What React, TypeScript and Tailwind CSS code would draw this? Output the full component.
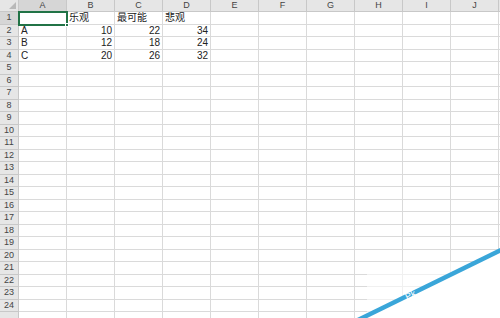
const cols = ["A", "B", "C", "D", "E", "F", "G", "H", "I", "J"];

const data: Record<number, { text: string; right?: boolean }[]> = {
  1: [{ text: "" }, { text: "乐观" }, { text: "最可能" }, { text: "悲观" }],
  2: [{ text: "A" }, { text: "10", right: true }, { text: "22", right: true }, { text: "34", right: true }],
  3: [{ text: "B" }, { text: "12", right: true }, { text: "18", right: true }, { text: "24", right: true }],
  4: [{ text: "C" }, { text: "20", right: true }, { text: "26", right: true }, { text: "32", right: true }],
};

const rows = Array.from({ length: 25 }, (_, i) => i + 1);

export default function App() {
  return (
    <div
      className="relative h-[318px] w-[500px] overflow-hidden bg-white text-[10px] text-[#222]"
      style={{ fontFamily: '"Liberation Sans", "Noto Sans CJK SC", sans-serif' }}
    >
      <div className="grid grid-cols-[19px_repeat(10,48px)_3px]">
        {/* Header row */}
        <div className="relative h-[12px] border-r border-b border-[#c8c8c8] bg-[#e6e6e6]">
          <svg className="absolute right-[2px] bottom-[2px]" width="7" height="7" viewBox="0 0 7 7">
            <polygon points="7,0 7,7 0,7" fill="#b9b9b9" />
          </svg>
        </div>
        {cols.map((c) => (
          <div
            key={c}
            className={`flex h-[12px] items-center justify-center border-r border-b border-[#c8c8c8] text-[9px] leading-none text-[#444] ${
              c === "A" ? "bg-[#d6d6d6]" : "bg-[#e6e6e6]"
            }`}
          >
            {c}
          </div>
        ))}
        <div className="h-[12px] border-b border-[#c8c8c8] bg-[#e6e6e6]" />

        {rows.map((r) => (
          <Row key={r} r={r} />
        ))}
      </div>

      {/* selection box on A1 */}
      <div className="absolute top-[11px] left-[18px] h-[14.5px] w-[50px] border-2 border-[#217346]">
        <div className="absolute -right-[3px] -bottom-[3px] h-[4px] w-[4px] border border-white bg-[#217346]" />
      </div>

      {/* watermark corner */}
      <svg className="pointer-events-none absolute inset-0" width="500" height="318" viewBox="0 0 500 318">
        <rect x="367" y="262" width="84" height="56" fill="#ffffff" opacity="0.6" />
        <polygon points="360,318 502,248 502,318" fill="#ffffff" />
        <line x1="358" y1="320" x2="503" y2="249" stroke="#3aa6d9" strokeWidth="4.5" />
        <text x="407" y="300" fill="#ffffff" fontSize="9" fontFamily="Liberation Sans, sans-serif" transform="rotate(-26 407 300)">
          Pk
        </text>
      </svg>
    </div>
  );
}

function Row({ r }: { r: number }) {
  const cells = data[r] ?? [];
  return (
    <>
      <div
        className={`flex h-[12.5px] items-center justify-center border-r border-b border-[#c8c8c8] text-[9px] leading-none text-[#444] ${
          r === 1 ? "bg-[#d6d6d6]" : "bg-[#e6e6e6]"
        }`}
      >
        {r < 25 ? r : ""}
      </div>
      {cols.map((c, i) => {
        const cell = cells[i];
        return (
          <div
            key={c}
            className={`flex h-[12.5px] items-end overflow-visible whitespace-nowrap border-r border-b border-[#dadada] px-[2px] pb-[0.5px] leading-none ${
              cell?.right ? "justify-end" : "justify-start"
            }`}
          >
            {cell?.text}
          </div>
        );
      })}
      <div className="h-[12.5px] border-b border-[#dadada]" />
    </>
  );
}
